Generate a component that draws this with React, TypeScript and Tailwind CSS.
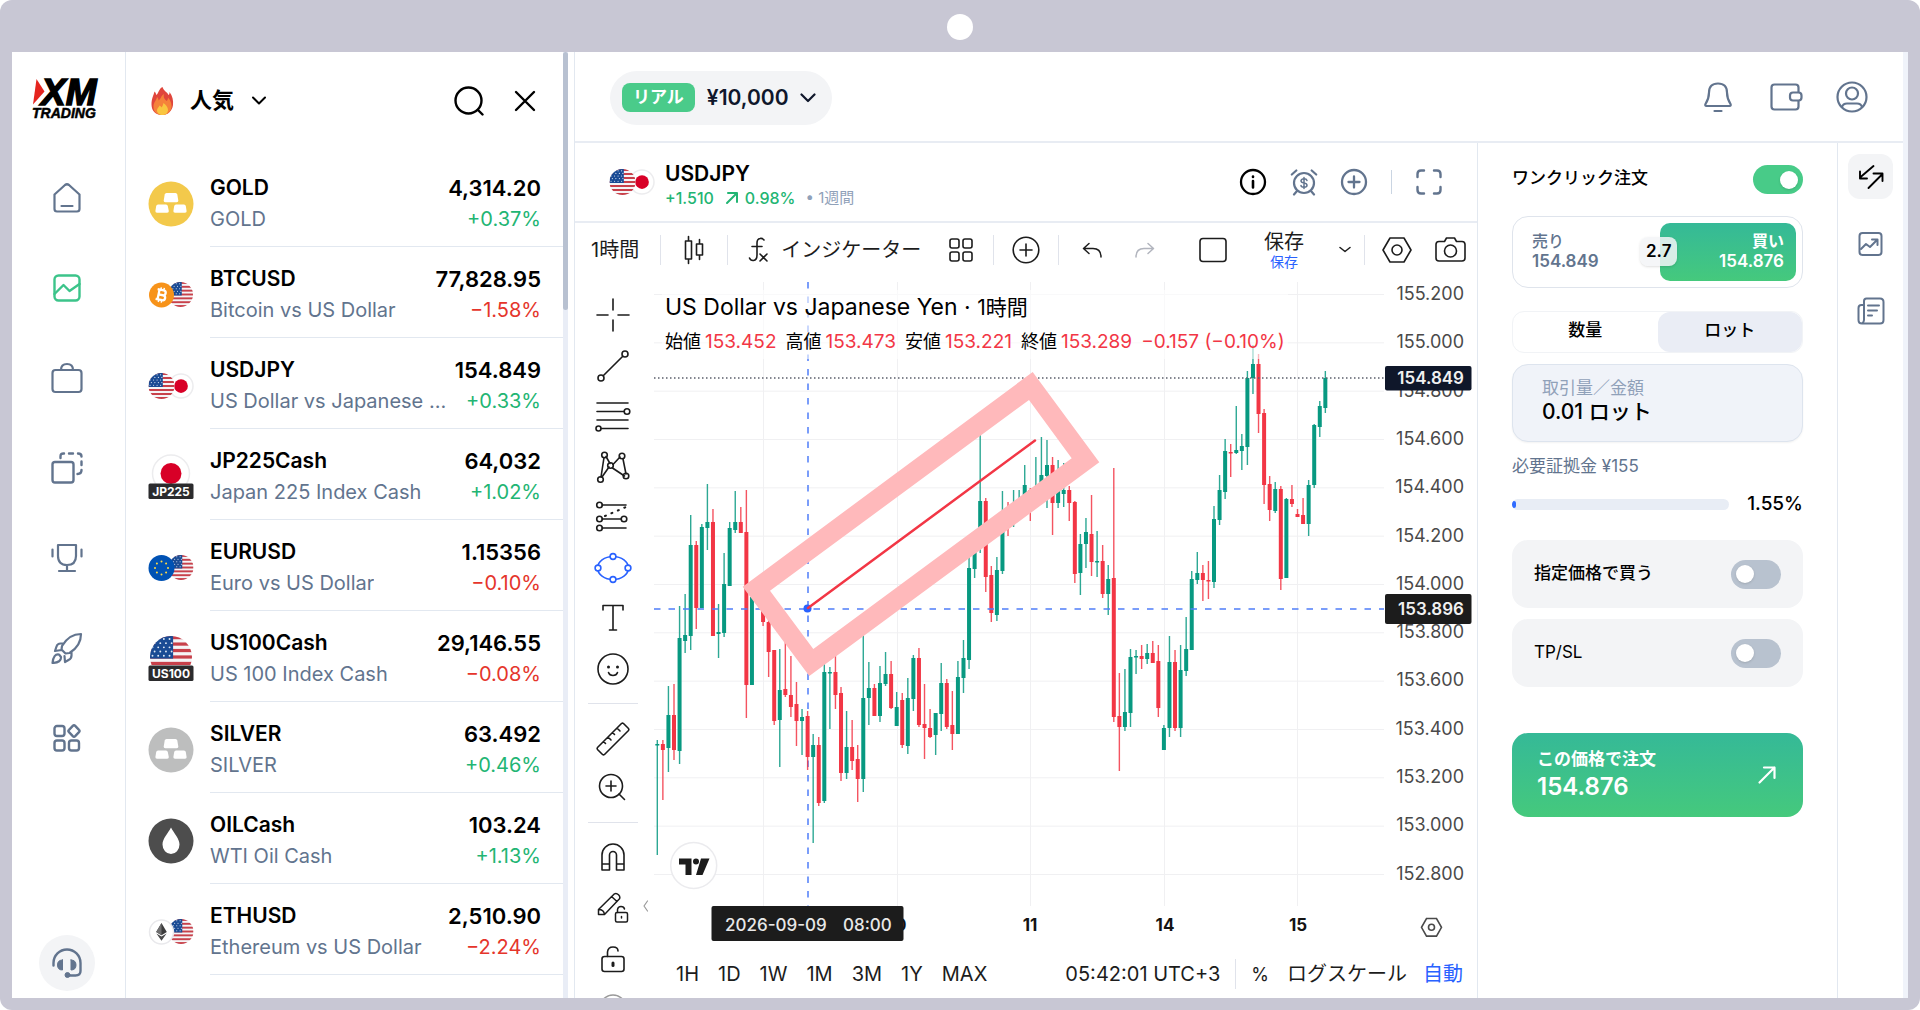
import { useState } from 'react'
import type { ReactNode } from 'react'
import clsx from 'clsx'

type IconProps = {
  w?: number
  h?: number
  box?: string
  sw?: number
  className?: string
  children: ReactNode
}

function Icon({ w = 28, h, box, sw = 2, className, children }: IconProps) {
  const height = h ?? w
  return (
    <svg
      width={w}
      height={height}
      viewBox={box ?? `0 0 ${w} ${height}`}
      fill="none"
      stroke="currentColor"
      strokeWidth={sw}
      strokeLinecap="round"
      strokeLinejoin="round"
      className={clsx('shrink-0', className)}
      aria-hidden="true"
    >
      {children}
    </svg>
  )
}

/* ---------- instrument badges ---------- */

function UsFlag({ x = 0, y = 0, r = 13, id }: { x?: number; y?: number; r?: number; id: string }) {
  const s = (r * 2) / 13
  return (
    <g>
      <clipPath id={id}>
        <circle cx={x + r} cy={y + r} r={r} />
      </clipPath>
      <g clipPath={`url(#${id})`}>
        <rect x={x} y={y} width={r * 2} height={r * 2} fill="#f5f5f7" />
        {[0, 2, 4, 6, 8, 10, 12].map((i) => (
          <rect key={i} x={x} y={y + i * s} width={r * 2} height={s} fill="#c8414b" />
        ))}
        <rect x={x} y={y} width={r * 1.1} height={s * 7} fill="#1a4b94" />
        {[0, 1, 2, 3, 4].map((row) =>
          [0, 1, 2, 3].map((col) => (
            <circle
              key={`${row}-${col}`}
              cx={x + r * 0.12 + col * r * 0.27 + (row % 2) * r * 0.1}
              cy={y + r * 0.14 + row * r * 0.2}
              r={r * 0.045}
              fill="#dfe8f5"
            />
          ))
        )}
      </g>
    </g>
  )
}

function JpFlag({ cx, cy, r }: { cx: number; cy: number; r: number }) {
  return (
    <g>
      <circle cx={cx} cy={cy} r={r - 0.5} fill="#fff" stroke="#ececee" strokeWidth="1.5" />
      <circle cx={cx} cy={cy} r={r * 0.55} fill="#d80027" />
    </g>
  )
}

function Bars({ fill }: { fill: string }) {
  return (
    <svg width="46" height="52" viewBox="0 0 46 52" className="shrink-0" aria-hidden="true">
      <circle cx="23" cy="26" r="22.5" fill={fill} />
      <g fill="#fff">
        <path d="M18.5 15h9q1.5 0 1.8 1.5l1 6q.2 1.800-1.600 1.800H17.300q-1.800 0-1.600-1.800l1-6q.3-1.500 1.800-1.500z" />
        <path d="M10 26.500h8q1.500 0 1.800 1.500l1 5q.2 1.800-1.600 1.800H9q-1.800 0-1.600-1.800l.8-5q.3-1.500 1.800-1.500z" />
        <path d="M28 26.500h8q1.500 0 1.800 1.500l.8 5q.2 1.800-1.600 1.800H27q-1.800 0-1.600-1.800l.8-5q.3-1.500 1.800-1.500z" />
      </g>
    </svg>
  )
}

function PairUsJp({ id }: { id: string }) {
  return (
    <svg width="46" height="28" viewBox="0 0 46 28" className="shrink-0" aria-hidden="true">
      <JpFlag cx={33} cy={14} r={12.500} />
      <UsFlag x={0.500} y={1} r={13} id={id} />
    </svg>
  )
}

function Badge({ kind }: { kind: string }) {
  if (kind === 'GOLD') return <Bars fill="#f3c94b" />
  if (kind === 'SILVER') return <Bars fill="#bdbebe" />
  if (kind === 'USDJPY') return <PairUsJp id="us-list" />
  if (kind === 'BTCUSD') {
    return (
      <svg width="46" height="28" viewBox="0 0 46 28" className="shrink-0" aria-hidden="true">
        <UsFlag x={20} y={1} r={12.500} id="us-btc" />
        <circle cx="13.500" cy="14" r="12.500" fill="#f7931a" />
        <g transform="rotate(12 13.500 14)" fill="none" stroke="#fff" strokeWidth="2.300">
          <path d="M10.500 9v10M8.500 9h6.200a2.400 2.400 0 0 1 0 5h-4M10.500 14h4.700a2.500 2.500 0 0 1 0 5H8.500" />
          <path d="M11.800 6.500V9M14.800 6.500V9M11.800 19v2.500M14.800 19v2.500" strokeWidth="1.500" />
        </g>
      </svg>
    )
  }
  if (kind === 'ETHUSD') {
    return (
      <svg width="46" height="28" viewBox="0 0 46 28" className="shrink-0" aria-hidden="true">
        <UsFlag x={20.500} y={1} r={12.500} id="us-eth" />
        <circle cx="13.500" cy="14" r="12" fill="#fff" stroke="#e9e9ec" strokeWidth="1.500" />
        <path d="M13.500 5l5.300 9-5.300 3.200L8.200 14z" fill="#3c3c3d" />
        <path d="M13.500 5v12.200L8.200 14z" fill="#6f6f70" />
        <path d="M8.400 15.500l5.100 3.100 5.100-3.100-5.100 7.300z" fill="#4a4a4b" />
      </svg>
    )
  }
  if (kind === 'EURUSD') {
    return (
      <svg width="46" height="28" viewBox="0 0 46 28" className="shrink-0" aria-hidden="true">
        <UsFlag x={20.500} y={1} r={12.500} id="us-eur" />
        <circle cx="13.500" cy="14" r="13" fill="#0052b4" />
        {Array.from({ length: 8 }, (_, i) => (
          <circle
            key={i}
            cx={13.5 + 6.5 * Math.cos((i * Math.PI) / 4)}
            cy={14 + 6.5 * Math.sin((i * Math.PI) / 4)}
            r="1"
            fill="#ffda44"
          />
        ))}
      </svg>
    )
  }
  if (kind === 'OILCash') {
    return (
      <svg width="46" height="46" viewBox="0 0 46 46" className="shrink-0" aria-hidden="true">
        <circle cx="23" cy="23" r="22.500" fill="#4d4d4d" />
        <path d="M23 9.500c3 6 8.500 11 8.500 17a8.500 9.500 0 0 1-17 0c0-6 5.500-11 8.500-17z" fill="#fff" />
      </svg>
    )
  }
  return (
    <svg width="46" height="46" viewBox="0 0 46 46" className="shrink-0" aria-hidden="true">
      {kind === 'JP225Cash' ? <JpFlag cx={23} cy={19.500} r={19} /> : <UsFlag x={2} y={0} r={21} id="us-100" />}
      <rect x="0.500" y="29.500" width="45" height="15.500" rx="1.500" fill="#2b2b2d" />
      <text x="23" y="41.500" textAnchor="middle" fontSize="12" fontWeight="700" fill="#fff">
        {kind.replace('Cash', '')}
      </text>
    </svg>
  )
}

/* ---------- data ---------- */

const instruments = [
  { symbol: 'GOLD', name: 'GOLD', price: '4,314.20', change: '+0.37%' },
  { symbol: 'BTCUSD', name: 'Bitcoin vs US Dollar', price: '77,828.95', change: '−1.58%' },
  { symbol: 'USDJPY', name: 'US Dollar vs Japanese ...', price: '154.849', change: '+0.33%' },
  { symbol: 'JP225Cash', name: 'Japan 225 Index Cash', price: '64,032', change: '+1.02%' },
  { symbol: 'EURUSD', name: 'Euro vs US Dollar', price: '1.15356', change: '−0.10%' },
  { symbol: 'US100Cash', name: 'US 100 Index Cash', price: '29,146.55', change: '−0.08%' },
  { symbol: 'SILVER', name: 'SILVER', price: '63.492', change: '+0.46%' },
  { symbol: 'OILCash', name: 'WTI Oil Cash', price: '103.24', change: '+1.13%' },
  { symbol: 'ETHUSD', name: 'Ethereum vs US Dollar', price: '2,510.90', change: '−2.24%' },
]

// up (1) or down (0), high, body top, body bottom, low
const candles: number[][] = [
  [1, 740, 744, 745, 855], [0, 740, 744, 750, 800], [1, 686, 715, 748, 772], [0, 684, 715, 750, 760],
  [1, 606, 638, 751, 764], [1, 594, 635, 641, 653], [1, 515, 545, 636, 650], [0, 541, 545, 608, 629],
  [1, 524, 527, 608, 608], [1, 484, 522, 528, 550], [0, 509, 522, 636, 636], [1, 604, 632, 634, 658],
  [1, 553, 584, 633, 637], [1, 522, 528, 586, 586], [1, 491, 522, 530, 533], [0, 507, 522, 533, 533],
  [0, 490, 532, 685, 718], [1, 590, 597, 685, 685], [0, 588, 592, 600, 602], [0, 600, 603, 622, 626],
  [0, 618, 622, 652, 677], [0, 650, 650, 721, 725], [1, 649, 690, 720, 767], [0, 640, 689, 695, 697],
  [0, 656, 695, 707, 717], [0, 682, 704, 721, 746], [1, 709, 717, 721, 755], [0, 711, 716, 757, 770],
  [1, 734, 745, 757, 843], [0, 737, 745, 803, 806], [1, 662, 672, 801, 803], [1, 667, 672, 673, 729],
  [0, 654, 672, 695, 709], [0, 687, 693, 773, 781], [1, 711, 747, 773, 779], [0, 720, 747, 761, 770],
  [0, 745, 759, 779, 802], [1, 630, 698, 779, 792], [1, 662, 688, 698, 725], [0, 684, 688, 716, 716],
  [1, 666, 683, 716, 722], [1, 652, 674, 684, 686], [0, 661, 674, 708, 709], [1, 692, 707, 726, 726],
  [0, 693, 700, 745, 748], [1, 678, 698, 746, 754], [1, 655, 658, 699, 711], [0, 648, 658, 725, 727],
  [0, 684, 724, 728, 759], [0, 709, 728, 737, 738], [1, 713, 713, 735, 755], [1, 663, 683, 714, 731],
  [0, 679, 683, 727, 729], [0, 691, 725, 734, 750], [1, 661, 677, 734, 734], [1, 640, 658, 678, 693],
  [1, 550, 568, 660, 669], [1, 545, 552, 569, 578], [1, 435, 501, 548, 553], [0, 498, 501, 577, 592],
  [0, 566, 575, 613, 622], [1, 557, 570, 615, 621], [1, 491, 520, 571, 574], [0, 502, 510, 525, 536],
  [1, 490, 508, 518, 527], [1, 490, 500, 510, 512], [1, 465, 485, 500, 502], [0, 488, 490, 510, 521],
  [1, 457, 488, 498, 500], [1, 437, 475, 490, 492], [1, 440, 465, 476, 508], [0, 457, 465, 503, 535],
  [1, 460, 488, 503, 508], [1, 463, 490, 494, 507], [0, 486, 490, 503, 521], [0, 501, 502, 574, 583],
  [1, 534, 544, 573, 595], [1, 518, 532, 544, 568], [0, 495, 534, 562, 576], [1, 531, 561, 562, 577],
  [0, 545, 561, 594, 598], [1, 565, 579, 594, 615], [0, 468, 578, 717, 722], [0, 673, 716, 727, 771],
  [1, 669, 712, 727, 731], [1, 649, 657, 713, 727], [1, 650, 656, 657, 674], [0, 645, 656, 659, 669],
  [1, 644, 653, 659, 664], [0, 641, 653, 663, 663], [0, 645, 661, 708, 717], [1, 725, 728, 750, 750],
  [1, 636, 662, 728, 737], [0, 650, 662, 728, 731], [1, 645, 670, 728, 737], [1, 617, 649, 671, 676],
  [1, 571, 579, 650, 650], [1, 552, 573, 580, 584], [0, 565, 573, 580, 601], [0, 561, 580, 581, 599],
  [1, 506, 519, 582, 588], [1, 475, 490, 520, 525], [1, 439, 451, 492, 499], [0, 444, 452, 453, 477],
  [1, 406, 450, 453, 454], [1, 434, 446, 451, 470], [1, 371, 378, 447, 465], [1, 345, 364, 378, 394],
  [0, 354, 364, 414, 433], [0, 409, 413, 485, 504], [0, 476, 484, 510, 521], [1, 482, 489, 511, 513],
  [0, 486, 489, 579, 590], [1, 498, 499, 578, 578], [0, 485, 499, 504, 507], [0, 509, 514, 517, 517],
  [0, 498, 515, 524, 524], [1, 480, 485, 524, 536], [1, 424, 425, 485, 488], [1, 401, 406, 427, 437],
  [1, 371, 378, 408, 413],
]

const prices = [
  '155.200', '155.000', '154.800', '154.600', '154.400', '154.200', '154.000',
  '153.800', '153.600', '153.400', '153.200', '153.000', '152.800',
]
const dayLines = [763, 897, 1030, 1164, 1297]

/* ---------- left navigation ---------- */

const navItems: { label: string; active?: boolean; icon: ReactNode }[] = [
  {
    label: 'ホーム',
    icon: (
      <Icon w={30} h={32} sw={2.2}>
        <path d="M2.500 12.500v14.500q0 2.500 2.500 2.500h20q2.500 0 2.500-2.500V12.500L17 3q-2-1.500-4 0zM9.500 24h11" />
      </Icon>
    ),
  },
  {
    label: 'マーケット',
    active: true,
    icon: (
      <Icon w={28} sw={2.400}>
        <rect x="1.500" y="1.500" width="25" height="25" rx="4" />
        <path d="M1.500 20l9-9 6 6L26.500 10" />
      </Icon>
    ),
  },
  {
    label: 'ポジション',
    icon: (
      <Icon w={32} h={32} sw={2.200}>
        <rect x="1.500" y="8" width="29" height="22" rx="3" />
        <path d="M10 8q0-6 6-6t6 6" />
      </Icon>
    ),
  },
  {
    label: 'コピー',
    icon: (
      <Icon w={32} h={32} sw={2.400}>
        <rect x="1.500" y="10" width="21" height="20.500" rx="2.500" />
        <path d="M9.500 6V4.500q0-3 3-3H13M18 1.500h4M27 1.500q3.500 0 3.500 3M30.500 9.500V13M30.500 18q0 4-4 4" />
      </Icon>
    ),
  },
  {
    label: 'コンテスト',
    icon: (
      <Icon w={32} h={30} sw={2.200}>
        <path d="M7 2h18v11q0 9-9 9t-9-9zM16 22v6M8 28h16M1.500 6.500v7M30.500 6.500v7" />
      </Icon>
    ),
  },
  {
    label: 'プロモーション',
    icon: (
      <Icon w={32} h={32} sw={2.200}>
        <path d="M30 2q-12 0-19 12l-.500 3.500 4 4L18.500 21Q30 14 30 2zM12.500 11.500H9.500q-3 0-4 3L4 19l6.500-1M20.500 20v3.500q0 3-3 4.500l-3.500 2-.5-6M8 22.500q-5.500-1-6.500 8.500 9-.5 8.500-6z" />
      </Icon>
    ),
  },
  {
    label: 'その他',
    icon: (
      <Icon w={28} h={28} sw={2.400}>
        <rect x="1.500" y="2" width="10" height="10" rx="2.500" />
        <rect x="1.500" y="16.500" width="10" height="10" rx="2.500" />
        <rect x="16" y="16.500" width="10" height="10" rx="2.500" />
        <path d="M19.800 1.800q1.200-1.200 2.400 0l3.800 4q1.200 1.200 0 2.400l-3.800 4q-1.200 1.200-2.400 0l-3.800-4q-1.200-1.200 0-2.400z" />
      </Icon>
    ),
  },
]

function SideNav() {
  return (
    <nav className="flex w-[114px] shrink-0 flex-col items-center border-r border-[#e2e8f0] pr-[3px] pb-[7px]">
      <svg width="72" height="46" viewBox="0 0 72 46" className="mt-[24px] shrink-0" aria-label="XM Trading">
        <path d="M5.500 3l8 12.500L2 28.500z" fill="#e5251f" />
        <g fill="#000" stroke="#000" fontFamily="Liberation Sans, sans-serif" fontWeight="700" fontStyle="italic">
          <text x="10" y="28.500" fontSize="37" strokeWidth="1.500">XM</text>
          <text x="1" y="41.500" fontSize="14" strokeWidth="0.500">TRADING</text>
        </g>
      </svg>
      <ul className="mt-[31px] flex flex-col">
        {navItems.map((item) => (
          <li key={item.label}>
            <button
              aria-label={item.label}
              className={clsx(
                'flex h-[90px] w-[90px] items-center justify-center',
                item.active ? 'text-[#3cc48a]' : 'text-slate-500'
              )}
            >
              {item.icon}
            </button>
          </li>
        ))}
      </ul>
      <button
        aria-label="サポート"
        className="mt-auto flex h-14 w-14 shrink-0 items-center justify-center rounded-full bg-gray-100 text-slate-500"
      >
        <Icon w={30} h={30} sw={2.400}>
          <path d="M1.500 17.500v-2.500a13 13 0 0 1 27 0v8q0 4.500-5 4.500h-7" />
          <path d="M10.500 12v10q-5 0-5-5t5-5zM19 12v10q5 0 5-5t-5-5z" fill="currentColor" strokeWidth="1" />
          <circle cx="15.500" cy="27" r="2.500" fill="currentColor" strokeWidth="1" />
        </Icon>
      </button>
    </nav>
  )
}

/* ---------- watchlist ---------- */

function Watchlist() {
  return (
    <section className="flex w-[449px] shrink-0 border-r border-[#e2e8f0]">
      <div className="min-w-0 flex-1">
        <header className="flex h-[104px] items-center pr-[27px] pb-[7px] pl-6">
          <svg width="24" height="30" viewBox="0 0 24 30" className="shrink-0" aria-hidden="true">
            <path d="M12.500 1c1 4 5 5 6 8 1-.5 1-2 1-3 3 4 4 8 3.500 13-.8 6-5 10-11 10S1.500 25 1.500 18.500c0-6 2-9 3-13 1 1 1.500 2 1.800 3.500C9 7 8.500 3 12.500 1z" fill="#e0463c" />
            <path d="M14 8c-1 4 1 5 2.500 7 1-.5 1.500-2 1.500-3.500 3 3.500 4 7 3.500 10-1 5-5 7.500-9.500 7.500S3 26 3.500 20c.3-4 3-5.500 3.500-9 1 1 1.500 2 1.500 3.500C11 13 11 9.500 14 8z" fill="#f5823a" />
            <path d="M13.500 17c2.500 2 4.500 4 4.500 7 0 3-2.500 5-5.500 5S7 27 7 24.500s2-3 2.500-5c1 .5 1.500 1 1.800 2 1.500-1 1.700-2.800 2.200-4.500z" fill="#f9c640" />
          </svg>
          <button className="ml-[16px] flex items-center gap-[17px] text-[22px] font-semibold">
            人気
            <Icon w={16} h={10} sw={2}>
              <path d="M2 1.500l6 6 6-6" />
            </Icon>
          </button>
          <button aria-label="検索" className="ml-auto">
            <Icon w={30} h={30} sw={2.400}>
              <circle cx="14.500" cy="14.500" r="13" />
              <path d="M24 24l4.500 4.500" />
            </Icon>
          </button>
          <button aria-label="閉じる" className="ml-[30px]">
            <Icon w={22} h={22} sw={2.400}>
              <path d="M2 2l18 18M20 2L2 20" />
            </Icon>
          </button>
        </header>
        <ul>
          {instruments.map((item) => (
            <li key={item.symbol} className="flex h-[91px] items-stretch pl-[22px]">
              <div className="flex w-[46px] shrink-0 items-center justify-center pt-1">
                <Badge kind={item.symbol} />
              </div>
              <button className="ml-[16px] flex min-w-0 flex-1 justify-between border-b border-[#e2e8f0] pt-[17px] pr-[22px]">
                <span className="flex min-w-0 flex-col text-left">
                  <span className="text-[21px] leading-[30px] font-semibold text-black">{item.symbol}</span>
                  <span className="truncate text-[20px] leading-[32px] text-slate-500">{item.name}</span>
                </span>
                <span className="flex flex-col text-right">
                  <span className="text-[22px] leading-[30px] font-semibold text-black">{item.price}</span>
                  <span
                    className={clsx(
                      'text-[20px] leading-[32px]',
                      item.change.startsWith('+') ? 'text-[#22b573]' : 'text-[#e5352b]'
                    )}
                  >
                    {item.change}
                  </span>
                </span>
              </button>
            </li>
          ))}
        </ul>
      </div>
      <div className="mr-[6px] w-[5px] bg-[#e9edf6]">
        <div className="h-[258px] rounded-full bg-[#b8c1d1]" />
      </div>
    </section>
  )
}

/* ---------- top bar ---------- */

function TopBar() {
  return (
    <header className="flex h-[91px] shrink-0 items-center border-b-2 border-[#e8ecf3] pr-[35px] pl-[35px]">
      <button className="mt-[2px] flex h-[54px] items-center rounded-full bg-gray-100 pr-4 pl-3 text-[21px] font-semibold text-slate-900">
        <span className="rounded-lg bg-[#4acb8a] px-[11px] text-[17px] leading-[29px] font-bold text-white">リアル</span>
        <span className="mr-[11px] ml-3">¥10,000</span>
        <Icon w={16} h={10} sw={2.200}>
          <path d="M1.500 1.500L8 8l6.500-6.500" />
        </Icon>
      </button>
      <div className="ml-auto flex items-center text-slate-500">
        <button aria-label="通知">
          <Icon w={30} h={32} sw={2.200}>
            <path d="M15 2.500q-9 0-9 9 0 6-3.500 11.500-.8 2 1 2h23q1.800 0 1-2Q24 17.500 24 11.500q0-9-9-9zM11.500 30h7" />
          </Icon>
        </button>
        <button aria-label="ウォレット" className="ml-[37px]">
          <Icon w={33} h={28} sw={2.200}>
            <path d="M28.500 9V4.500q0-3-3-3H4.500q-3 0-3 3v19q0 3 3 3h21q3 0 3-3V18" />
            <rect x="20" y="9.500" width="11.500" height="8" rx="3" />
          </Icon>
        </button>
        <button aria-label="アカウント" className="ml-[33px]">
          <Icon w={32} h={32} sw={2.200}>
            <circle cx="16" cy="16" r="14.500" />
            <circle cx="16" cy="12.500" r="6" />
            <path d="M6 26q1-3.500 5-3.500h10q4 0 5 3.500" />
          </Icon>
        </button>
      </div>
    </header>
  )
}

/* ---------- chart ---------- */

function ChartHeader() {
  return (
    <div className="flex h-[80px] shrink-0 items-center border-b-2 border-[#e8ecf3] pr-[35px] pl-[34px]">
      <PairUsJp id="us-head" />
      <div className="ml-[10px] flex flex-col pt-[6px]">
        <h1 className="text-[21px] leading-[26px] font-semibold text-black">USDJPY</h1>
        <p className="flex items-center text-[16px] leading-[22px] font-medium text-[#22b573]">
          +1.510
          <Icon w={14} h={14} className="mr-[6px] ml-[11px]">
            <path d="M2 12L12 2M3 2h9v9" />
          </Icon>
          0.98%
          <span className="ml-[10px] text-[15px] font-normal text-slate-400">• 1週間</span>
        </p>
      </div>
      <div className="ml-auto flex items-center text-slate-500">
        <button aria-label="情報" className="text-black">
          <Icon w={28} sw={2.300}>
            <circle cx="14" cy="14" r="12" />
            <path d="M14 13v6.500M14 8.500v.5" strokeWidth="2.600" />
          </Icon>
        </button>
        <button aria-label="アラート" className="ml-[23px]">
          <Icon w={28} sw={2.200}>
            <circle cx="14" cy="15" r="10" />
            <path d="M1.800 6.500l4.500-4M26.200 6.500l-4.500-4M7 23l-3 3.500M21 23l3 3.500" />
            <path d="M17 12.500q-.500-1.700-3-1.700t-3 2q0 1.700 3 2.200t3 2.200q0 2-3 2t-3-1.700M14 9.500v11" strokeWidth="1.500" />
          </Icon>
        </button>
        <button aria-label="追加" className="ml-[22px]">
          <Icon w={28} sw={2.300}>
            <circle cx="14" cy="14" r="12" />
            <path d="M14 8.500v11M8.500 14h11" />
          </Icon>
        </button>
        <span className="ml-[23px] h-6 w-px bg-slate-300" />
        <button aria-label="全画面" className="ml-[24px]">
          <Icon w={26} sw={2.400}>
            <path d="M1.500 8V5q0-3.500 3.500-3.500h3M18 1.500h3q3.500 0 3.500 3.500v3M24.500 18v3q0 3.500-3.500 3.500h-3M8 24.500H5q-3.500 0-3.500-3.500v-3" />
          </Icon>
        </button>
      </div>
    </div>
  )
}

function Sep() {
  return <span className="h-[30px] w-px shrink-0 bg-[#e0e3eb]" />
}

function ChartToolbar() {
  return (
    <div className="flex h-[54px] shrink-0 items-center pr-[11px] pl-[16px] text-[20px] text-[#1c1c1c]">
      <button className="whitespace-nowrap">1時間</button>
      <span className="ml-[21px] flex items-center gap-[22px]">
        <Sep />
        <button aria-label="ローソク足">
          <Icon w={22} h={30} sw={1.600}>
            <path d="M5.500 1.500v4.500M5.500 24v4.500M2.500 6h6v18h-6zM16.500 4.500V9M16.500 20v4.500M13.500 9h6v11h-6z" />
          </Icon>
        </button>
        <Sep />
      </span>
      <button className="ml-[19px] flex items-center gap-[12px] whitespace-nowrap">
        <Icon w={22} h={26} sw={1.600}>
          <path d="M17 3q-1.500-2-4-1.500-3 .5-3 4.500v12q0 5-3.500 5.500-3 .3-4-2.500M5 9.500h10M13 17l7 7M20 17l-7 7" />
        </Icon>
        インジケーター
      </button>
      <button aria-label="レイアウト" className="ml-[28px]">
        <Icon w={24} h={24} sw={1.600}>
          <rect x="1" y="1" width="9" height="9" rx="2" />
          <rect x="14" y="1" width="9" height="9" rx="2" />
          <rect x="1" y="14" width="9" height="9" rx="2" />
          <rect x="14" y="14" width="9" height="9" rx="2" />
        </Icon>
      </button>
      <span className="ml-[20px] flex items-center gap-[18px]">
        <Sep />
        <button aria-label="比較">
          <Icon w={28} sw={1.600}>
            <circle cx="14" cy="14" r="12.800" />
            <path d="M14 8v12M8 14h12" />
          </Icon>
        </button>
        <Sep />
      </span>
      <button aria-label="元に戻す" className="ml-[23px]">
        <Icon w={20} h={16} sw={1.500}>
          <path d="M7 1.500L1.500 6.500 7 11.500M2 6.500h9q8 0 8 8.500" />
        </Icon>
      </button>
      <button aria-label="やり直す" className="ml-[33px] text-[#b2b5be]">
        <Icon w={20} h={16} sw={1.500}>
          <path d="M13 1.500l5.500 5-5.500 5M18 6.500H9q-8 0-8 8.500" />
        </Icon>
      </button>
      <button aria-label="ウィンドウ" className="ml-auto">
        <Icon w={28} h={26} sw={1.600}>
          <rect x="1" y="1.500" width="26" height="23" rx="3" />
        </Icon>
      </button>
      <button className="ml-[37px] flex flex-col items-center leading-[24px]">
        保存
        <span className="text-[14px] leading-[16px] text-[#2962ff]">保存</span>
      </button>
      <button aria-label="保存メニュー" className="ml-[35px]">
        <Icon w={12} h={8} sw={1.500}>
          <path d="M1 1.500l5 4 5-4" />
        </Icon>
      </button>
      <span className="ml-[13px] flex">
        <Sep />
      </span>
      <button aria-label="設定" className="ml-[17px]">
        <Icon w={30} h={28} sw={1.600}>
          <path d="M8 2h14l7 12-7 12H8L1 14z" />
          <circle cx="15" cy="14" r="5" />
        </Icon>
      </button>
      <button aria-label="スナップショット" className="ml-[23px]">
        <Icon w={31} h={28} sw={1.600}>
          <path d="M4 5.500h5.500L11.500 2h8l2 3.500H27q3 0 3 3V22q0 3-3 3H4q-3 0-3-3V8.500q0-3 3-3z" />
          <circle cx="15.500" cy="15" r="6" />
        </Icon>
      </button>
    </div>
  )
}

const drawTools: { label: string; active?: boolean; icon: ReactNode }[] = [
  { label: '十字', icon: <path d="M17 1v11M17 22v11M1 17h11M22 17h11" /> },
  {
    label: 'トレンドライン',
    icon: (
      <>
        <circle cx="5" cy="29" r="3" />
        <circle cx="29" cy="5" r="3" />
        <path d="M7.200 26.800L26.800 7.200" />
      </>
    ),
  },
  {
    label: 'フィボナッチ',
    icon: (
      <>
        <path d="M1 4h31M1 12.500h27M1 21h31M5 29.500h27" />
        <circle cx="31" cy="12.500" r="2.800" />
        <circle cx="2.500" cy="29.500" r="2.500" />
      </>
    ),
  },
  {
    label: 'パターン',
    icon: (
      <>
        <path d="M5 27L8 7.500M10 6.500l4 7M13 17l-7 10M17 14.500L24 7M16.500 18l12 8M27 9l3 15" />
        <circle cx="8.500" cy="5" r="2.800" />
        <circle cx="26" cy="6" r="2.800" />
        <circle cx="14.500" cy="15.500" r="2.800" />
        <circle cx="4.500" cy="29.500" r="2.800" />
        <circle cx="30" cy="26" r="2.800" />
      </>
    ),
  },
  {
    label: '予測',
    icon: (
      <>
        <path d="M6 5h24M6 19h19M6 28h24" />
        <path d="M9 16L30 7" strokeDasharray="1 6" strokeWidth="2" />
        <circle cx="3.500" cy="5" r="2.800" />
        <circle cx="3.500" cy="19" r="2.800" />
        <circle cx="3.500" cy="28" r="2.800" />
        <circle cx="28" cy="19" r="2.800" />
      </>
    ),
  },
  {
    label: '図形',
    active: true,
    icon: (
      <>
        <ellipse cx="17" cy="17" rx="15.500" ry="11.500" />
        <g fill="#fff">
          <circle cx="17" cy="5.500" r="2.900" />
          <circle cx="17" cy="28.500" r="2.900" />
          <circle cx="2" cy="17" r="2.900" />
          <circle cx="32" cy="17" r="2.900" />
        </g>
      </>
    ),
  },
  { label: 'テキスト', icon: <path d="M7 9V4.500h20V9M17 4.500V29M13.500 29h7" /> },
  {
    label: 'アイコン',
    icon: (
      <>
        <circle cx="17" cy="17" r="15" />
        <path d="M12.500 20.500q1 3 4.500 3t4.500-3" />
        <path d="M12.500 15v.1M21.500 15v.1" strokeWidth="3" />
      </>
    ),
  },
]

function DrawTools() {
  return (
    <div className="flex w-[79px] shrink-0 flex-col items-center overflow-hidden pr-[4px] text-[#1c1c1c]">
      <div className="mt-[13px] flex h-[404px] shrink-0 flex-col">
        {drawTools.map((tool) => (
          <button
            key={tool.label}
            aria-label={tool.label}
            className={clsx('flex w-[50px] flex-1 items-center justify-center', tool.active && 'text-[#2962ff]')}
          >
            <Icon w={38} h={34} box="-2 0 38 34" sw={1.600}>
              {tool.icon}
            </Icon>
          </button>
        ))}
      </div>
      <span className="mt-[9px] h-px w-[50px] shrink-0 bg-[#e0e3eb]" />
      <button aria-label="定規" className="mt-[10px] flex h-[49px] shrink-0 items-center">
        <Icon w={36} h={36} sw={1.600}>
          <path d="M26.500 2.500q1-.8 2 0l5 5q.8 1 0 2l-24 24q-1 .8-2 0l-5-5q-.8-1 0-2zM22 7l3 3M17.500 11.500l2 2M13 16l3 3M8.500 20.500l2 2" />
        </Icon>
      </button>
      <button aria-label="拡大" className="flex h-[49px] shrink-0 items-center">
        <Icon w={32} h={32} sw={1.600}>
          <circle cx="14" cy="14" r="11.500" />
          <path d="M14 9v10M9 14h10M22 22l5.500 5.500" />
        </Icon>
      </button>
      <span className="mt-[10px] h-px w-[50px] shrink-0 bg-[#e0e3eb]" />
      <button aria-label="マグネット" className="mt-2 flex h-[51px] shrink-0 items-center">
        <Icon w={24} h={28} sw={1.600}>
          <path d="M1 27V12a11 11 0 0 1 22 0v15h-7.500V12a3.500 3.500 0 0 0-7 0v15zM1 21h7.500M15.500 21H23" />
        </Icon>
      </button>
      <button aria-label="描画モード" className="flex h-[51px] shrink-0 items-center">
        <Icon w={32} h={32} sw={1.500}>
          <path d="M1.500 17.500L17.500 1.800q2-1 4 1t1 4L7.500 22.500h-6zM14.500 4.500l5.500 5M1.500 17.500q5.500 0 6 5" />
          <rect x="18.500" y="20.500" width="12" height="9.500" rx="1.500" />
          <path d="M20.500 20.500v-3q.5-3 3.500-3t3.500 2.500M24.500 24.500v1.500" />
        </Icon>
      </button>
      <button aria-label="ロック" className="flex h-[51px] shrink-0 items-center">
        <Icon w={24} h={28} sw={1.600}>
          <rect x="1" y="11.500" width="22" height="15" rx="2.500" />
          <path d="M6.500 11.500V7q.500-5 5.500-5t5 4" />
          <path d="M12 18v2.500" strokeWidth="3" />
        </Icon>
      </button>
      <button aria-label="表示" className="mt-[10px] flex shrink-0 text-[#9a9a9a]">
        <Icon w={28} h={28} sw={1.600}>
          <circle cx="14" cy="14" r="13" />
        </Icon>
      </button>
    </div>
  )
}

function PriceChart() {
  return (
    <svg viewBox="654 282 823 668" preserveAspectRatio="none" className="block h-full w-full" role="img" aria-label="USDJPY チャート">
      <g stroke="#f0f0f2" strokeWidth="1">
        {prices.map((p, i) => (
          <line key={p} x1="654" x2="1384" y1={294.5 + i * 48.33} y2={294.5 + i * 48.33} />
        ))}
        {dayLines.map((x) => (
          <line key={x} x1={x + 0.5} x2={x + 0.5} y1="282" y2="906" />
        ))}
      </g>

      <g stroke="#4f7df9" strokeWidth="1.500" strokeDasharray="6.500 8">
        <line x1="808" x2="808" y1="282" y2="906" />
      </g>
      {candles.map(([up, high, top, bottom, low], i) => {
        const x = 657.3 + i * 5.567
        const color = up ? '#089981' : '#f23645'
        return (
          <g key={i} fill={color}>
            <rect x={x - 0.7} y={high} width="1.400" height={low - high} opacity="0.850" />
            <rect x={x - 2} y={top} width="4" height={Math.max(bottom - top, 1.5)} />
          </g>
        )
      })}
      <line x1="654" x2="1384" y1="609" y2="609" stroke="#4f7df9" strokeWidth="1.500" strokeDasharray="6.500 8" />
      <line x1="654" x2="1384" y1="378" y2="378" stroke="#5b5f6b" strokeWidth="1.300" strokeDasharray="1.500 2.500" />

      <path
        d="M742.700 586.700L1032.700 372l66.600 90.300L809.300 676zM770 590.700L813.300 649l258.400-190.700L1029 400z"
        fill="#ffb9bb"
        fillRule="evenodd"
      />
      <circle cx="807.500" cy="608.500" r="4" fill="#2962ff" />
      <line x1="808" y1="608" x2="1035" y2="440.500" stroke="#f23645" strokeWidth="2.500" strokeLinecap="round" />

      <circle cx="693.700" cy="865.500" r="23" fill="#fff" stroke="#ebebee" strokeWidth="1.500" />
      <path d="M679 858.500h12.500V875h-6v-10.500H679zM701 858.500h8.500L702.500 875h-6.500z" fill="#1c1c1c" />
      <circle cx="696" cy="861.500" r="3" fill="#1c1c1c" />

      <g fontSize="18" fill="#4a4a4a">
        {prices.map((p, i) => (
          <text key={p} x="1464" y={300 + i * 48.3} textAnchor="end">
            {p}
          </text>
        ))}
      </g>
      <rect x="1385" y="366" width="86.500" height="24.500" rx="2" fill="#0f172a" />
      <rect x="1385" y="594" width="86.500" height="30" rx="2" fill="#1c1c1c" />
      <g fontSize="17" fontWeight="600" fill="#f1f1f1">
        <text x="1464" y="384" textAnchor="end">154.849</text>
        <text x="1464" y="615" textAnchor="end">153.896</text>
      </g>

      <g fontSize="17" fontWeight="700" fill="#131313" textAnchor="middle">
        <text x="897" y="931">10</text>
        <text x="1030" y="931">11</text>
        <text x="1165" y="931">14</text>
        <text x="1298" y="931">15</text>
      </g>
      <rect x="711.500" y="906" width="192" height="35" rx="2" fill="#1c1c1c" />
      <g fontSize="17" fontWeight="500" fill="#e8e8e8">
        <text x="725" y="931">2026-09-09</text>
        <text x="843" y="931">08:00</text>
      </g>
      <g fill="none" stroke="#4a4a4a" strokeWidth="1.600">
        <path d="M1426.500 918.500h10l5 8.800-5 8.800h-10l-5-8.800z" />
        <circle cx="1431.500" cy="927.300" r="3" />
      </g>
    </svg>
  )
}

const ohlc = [
  ['始値', '153.452'],
  ['高値', '153.473'],
  ['安値', '153.221'],
  ['終値', '153.289'],
]

function ChartPanel() {
  return (
    <main className="flex min-w-0 flex-1 flex-col border-r border-[#e2e8f0]">
      <ChartHeader />
      <ChartToolbar />
      <div className="flex min-h-0 flex-1">
        <DrawTools />
        <div className="relative flex min-w-0 flex-1 flex-col pt-[5px]">
          <div className="relative min-h-0 flex-1">
            <PriceChart />
            <div className="absolute top-[8px] left-[8px] bg-white/60 px-[3px] whitespace-nowrap text-black">
              <h2 className="text-[23px] leading-[34px]">
                US Dollar vs Japanese Yen · <span className="text-[21px]">1時間</span>
              </h2>
              <dl className="flex items-center gap-[9px] text-[18px] leading-[34px]">
                {ohlc.map(([name, value]) => (
                  <div key={name} className="flex gap-[4px]">
                    <dt>{name}</dt>
                    <dd className="text-[19px] text-[#f23645]">{value}</dd>
                  </div>
                ))}
                <dd className="text-[19px] text-[#f23645]">−0.157 (−0.10%)</dd>
              </dl>
            </div>
          </div>
          <button aria-label="ツールバーを隠す" className="absolute top-[622px] left-[-12px] text-[#9a9a9a]">
            <Icon w={8} h={14} sw={1.200}>
              <path d="M5.500 2L2 7l3.500 5" />
            </Icon>
          </button>
          <div className="flex h-[48px] shrink-0 items-center pr-[14px] pl-[22px] text-[20px] whitespace-nowrap text-[#1c1c1c]">
            <div className="flex gap-[19px]">
              {['1H', '1D', '1W', '1M', '3M', '1Y', 'MAX'].map((r) => (
                <button key={r}>{r}</button>
              ))}
            </div>
            <span className="ml-auto">05:42:01 UTC+3</span>
            <span className="mr-[15px] ml-[15px] flex">
              <Sep />
            </span>
            <button className="text-[18px]">%</button>
            <button className="ml-[18px]">ログスケール</button>
            <button className="ml-[16px] text-[#2962ff]">自動</button>
          </div>
        </div>
      </div>
    </main>
  )
}

/* ---------- order panel ---------- */

function Toggle({ id, checked, onChange }: { id: string; checked: boolean; onChange: (v: boolean) => void }) {
  return (
    <input
      id={id}
      type="checkbox"
      checked={checked}
      onChange={(e) => onChange(e.target.checked)}
      className="flex h-[29px] w-[50px] shrink-0 cursor-pointer appearance-none items-center rounded-full bg-[#b8c2cf] px-[5px] before:h-[18px] before:w-[18px] before:rounded-full before:bg-white before:shadow before:content-[''] checked:justify-end checked:bg-[#48cb88]"
    />
  )
}

function OrderPanel() {
  const [oneClick, setOneClick] = useState(true)
  const [limit, setLimit] = useState(false)
  const [tpsl, setTpsl] = useState(false)
  const [amount, setAmount] = useState('0.01 ロット')

  return (
    <aside className="flex w-[360px] shrink-0 flex-col border-r border-[#e2e8f0] px-[34px] pt-[22px] text-[17px] text-black">
      <div className="flex items-center justify-between">
        <label htmlFor="one-click" className="pb-[2px] text-[17px] leading-[25px] font-medium">
          ワンクリック注文
        </label>
        <Toggle id="one-click" checked={oneClick} onChange={setOneClick} />
      </div>

      <div className="relative mt-[22px] flex h-[72px] rounded-2xl border border-[#dfe4ec] p-[6px] text-[17px] leading-[20px] font-semibold">
        <button className="flex flex-1 flex-col justify-center pb-[3px] pl-[13px] text-left text-slate-500">
          <span className="text-[16px] font-medium">売り</span>
          <span>154.849</span>
        </button>
        <button className="flex w-[136px] flex-col justify-center rounded-[10px] bg-linear-to-b from-[#35b997] to-[#45c97c] pr-[12px] pb-[3px] text-right text-white">
          <span className="w-full text-[16px]">買い</span>
          <span className="w-full">154.876</span>
        </button>
        <span className="absolute top-[20px] left-[127px] rounded-lg bg-[#f3f5f7]/85 px-[6px] leading-[29px] shadow-sm">2.7</span>
      </div>

      <div className="mt-[23px] flex h-[42px] rounded-xl border border-[#f1f3f6] font-medium">
        <button className="flex-1 pb-[3px]">数量</button>
        <button className="flex-1 rounded-xl bg-[#eaedf5] pb-[3px]">ロット</button>
      </div>

      <div className="mt-[11px] flex h-[78px] flex-col justify-center rounded-2xl border border-[#dde4ee] bg-[#f0f3f9] pb-[5px] pl-[29px] shadow-xs">
        <label htmlFor="amount" className="leading-[22px] text-slate-400">
          取引量／金額
        </label>
        <input
          id="amount"
          value={amount}
          onChange={(e) => setAmount(e.target.value)}
          className="w-full bg-transparent text-[21px] leading-[26px] font-medium outline-none"
        />
      </div>

      <p className="mt-[12px] leading-[25px] text-slate-500">必要証拠金 ¥155</p>

      <div className="mt-[12px] flex items-center gap-[18px]">
        <div role="progressbar" aria-valuenow={1.55} className="flex h-[11px] flex-1 items-center overflow-hidden rounded-full bg-[#e8edf5]">
          <span className="h-[7px] w-1 rounded-full bg-[#2f6bff]" />
        </div>
        <span className="text-[19px] leading-[26px] font-medium">1.55%</span>
      </div>

      <div className="mt-[23px] flex h-[68px] items-center justify-between rounded-2xl bg-gray-100 px-[22px]">
        <label htmlFor="limit" className="font-medium">
          指定価格で買う
        </label>
        <Toggle id="limit" checked={limit} onChange={setLimit} />
      </div>
      <div className="mt-[11px] flex h-[68px] items-center justify-between rounded-2xl bg-gray-100 px-[22px]">
        <label htmlFor="tpsl">TP/SL</label>
        <Toggle id="tpsl" checked={tpsl} onChange={setTpsl} />
      </div>

      <button className="mt-[46px] flex h-[84px] items-center justify-between rounded-2xl bg-linear-to-b from-[#35b997] to-[#45c97c] pr-[26px] pl-[25px] text-white">
        <span className="flex flex-col pb-1 text-left font-semibold">
          <span className="leading-[26px]">この価格で注文</span>
          <span className="text-[24px] leading-[29px]">154.876</span>
        </span>
        <Icon w={20} h={20} sw={2.200}>
          <path d="M2.500 17.500l15-15M7 2.500h10.500V13" />
        </Icon>
      </button>
    </aside>
  )
}

function RightRail() {
  return (
    <div className="flex w-[65px] shrink-0 flex-col items-center gap-[22px] pt-[11px] text-slate-500">
      <button aria-label="注文" className="flex h-[45px] w-[45px] items-center justify-center rounded-xl bg-gray-100 text-black">
        <Icon w={26} h={26} sw={1.900}>
          <path d="M15.500 2L2 13.500M2 7.500v7h7M10.500 24L24 10.500M15.500 9.500H24.500V17" />
        </Icon>
      </button>
      <button aria-label="分析" className="flex h-[45px] w-[45px] items-center justify-center">
        <Icon w={26} h={26} sw={2}>
          <rect x="1.500" y="2" width="22" height="22" rx="3" />
          <path d="M3 18l5-5 4 3 7-7M14 8.500h5.500V14" />
        </Icon>
      </button>
      <button aria-label="ニュース" className="flex h-[45px] w-[45px] items-center justify-center">
        <Icon w={28} h={28} sw={2}>
          <path d="M9.500 1.500H23q3.500 0 3.500 3.500v18q0 3.500-3.500 3.500H5q-3.500 0-3.500-3.500V11q0-3 3-3h2.500M7 8V4q0-2.500 2.500-2.500M7 8v15q0 2-2 3.500M11 8.500h11M11 13.500h9M11 18.500h4" />
        </Icon>
      </button>
    </div>
  )
}

export default function App() {
  return (
    <div className="bg-white font-['Inter','Noto_Sans_CJK_JP',sans-serif]">
      <div className="flex h-screen flex-col rounded-xl bg-[#c8c7d4] px-3 pb-3">
        <div className="flex h-[52px] shrink-0 items-center justify-center pt-[2px]">
          <span className="h-[26px] w-[26px] rounded-full bg-white" />
        </div>
        <div className="flex min-h-0 flex-1 overflow-hidden bg-white">
          <SideNav />
          <Watchlist />
          <div className="flex min-w-0 flex-1 flex-col">
            <TopBar />
            <div className="flex min-h-0 flex-1">
              <ChartPanel />
              <OrderPanel />
              <RightRail />
            </div>
          </div>
          <div className="w-[5px] shrink-0 bg-[#f0f3fa]" />
        </div>
      </div>
    </div>
  )
}
